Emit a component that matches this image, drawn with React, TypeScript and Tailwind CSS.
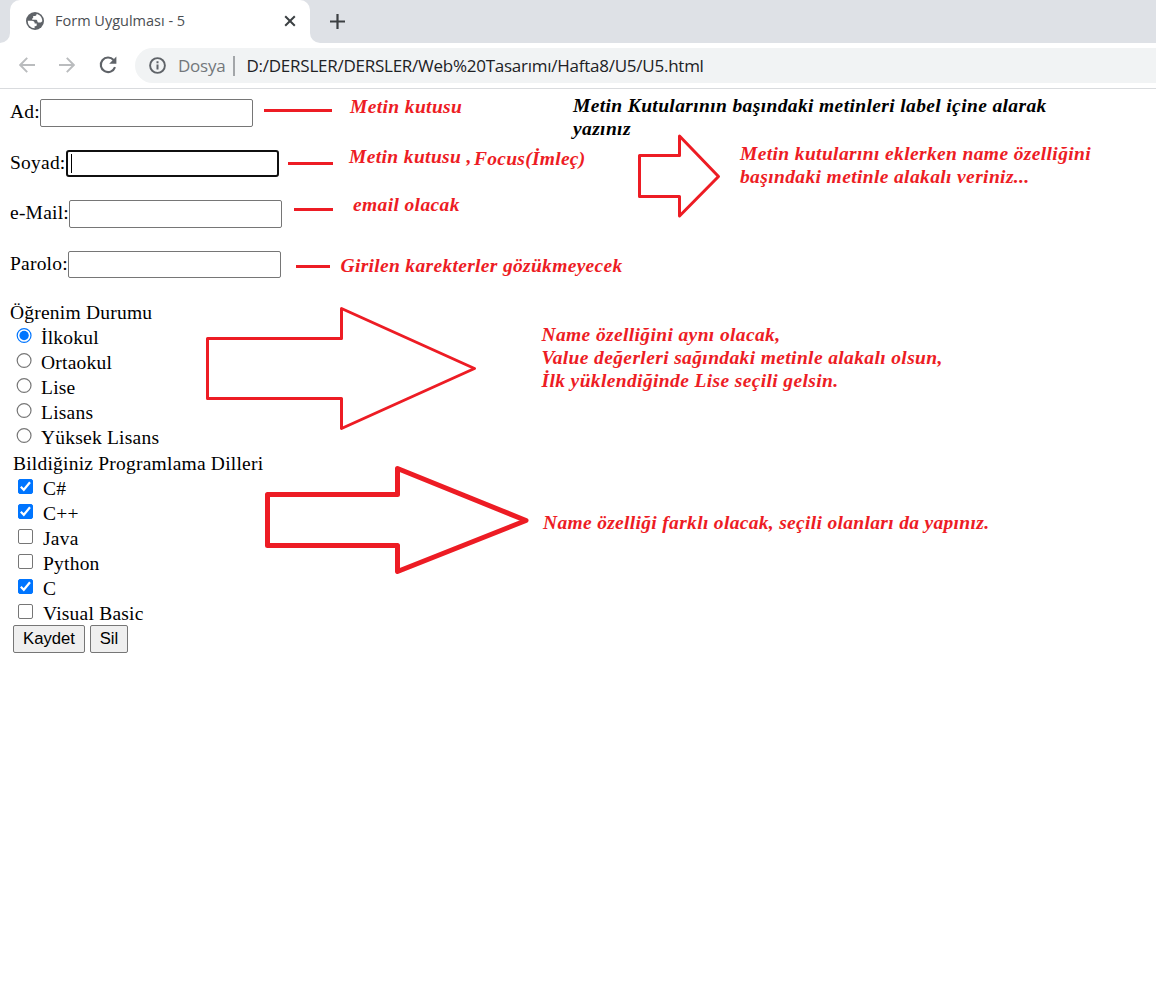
import type { ReactNode } from "react";

const fields = [
  { label: "Ad:", w: "w-[30px]", h: "h-7", row: "h-[51px]", type: "text" },
  { label: "Soyad:", w: "w-[56px]", h: "h-[27px]", row: "h-[50px]", type: "text", focused: true },
  { label: "e-Mail:", w: "w-[59px]", h: "h-7", row: "h-[51px]", type: "email" },
  { label: "Parolo:", w: "w-[58px]", h: "h-[27px]", row: "h-[49px]", type: "password" },
];

const schools = ["İlkokul", "Ortaokul", "Lise", "Lisans", "Yüksek Lisans"];

const languages = [
  { name: "C#", on: true },
  { name: "C++", on: true },
  { name: "Java", on: false },
  { name: "Python", on: false },
  { name: "C", on: true },
  { name: "Visual Basic", on: false },
];

function Browser() {
  return (
    <header className="font-['Open_Sans',sans-serif]">
      <div className="flex h-[43px] bg-[#dee1e6]">
        <div className="w-2.5 bg-white">
          <div className="h-full rounded-br-[10px] bg-[#dee1e6]" />
        </div>
        <div className="flex w-[300px] items-center rounded-t-[10px] bg-white pl-4 pr-3">
          <svg className="-mt-0.5 size-[18px] shrink-0" viewBox="0 0 18 18">
            <circle cx="9" cy="9" r="9" fill="#5f6368" />
            <path
              d="M1.700 8.800h4.100c1.900 0 2.900.9 2.900 2.600h2v1.700c0 .8-.5 1.200-1.300 1.200H8.600v2A7.300 7.300 0 0 1 1.700 8.800z"
              fill="#fff"
            />
            <path
              d="M10.600 1.900c-.1 1.300-.6 2-1.700 2H7.200v1.500c0 .6-.4.9-1 .9v1.400h3.500c1.100 0 1.700.6 1.700 1.600 0 .8.5 1.200 1.300 1.200h1.200c.9 0 1.600-.5 2.400-1.300C16.400 5.400 14 2.600 10.600 1.900z"
              fill="#fff"
            />
          </svg>
          <span className="ml-[11px] -mt-0.5 whitespace-nowrap text-[14.500px] text-[#4a4e52]">
            Form Uygulması - 5
          </span>
          <svg className="-mt-px ml-auto size-4" viewBox="0 0 16 16" stroke="#3c4043" strokeWidth="2">
            <path d="M3.200 3.200l9.600 9.600M12.800 3.200l-9.600 9.600" />
          </svg>
        </div>
        <div className="w-2.5 bg-white">
          <div className="h-full rounded-bl-[10px] bg-[#dee1e6]" />
        </div>
        <svg className="ml-2.5 mt-3.5 size-[15px]" viewBox="0 0 15 15" stroke="#3c4043" strokeWidth="2.200">
          <path d="M7.500 0v15M0 7.500h15" />
        </svg>
      </div>
      <div className="flex h-[46px] items-center border-b border-[#d9dbde] bg-white pl-[19px]">
        <svg className="-mt-0.5 size-4" viewBox="0 0 16 16" fill="none" stroke="#babcbe" strokeWidth="1.900">
          <path d="M16 8H1.500M8.200 .8L1.200 8l7 7.200" />
        </svg>
        <svg className="-mt-0.5 ml-6 size-4" viewBox="0 0 16 16" fill="none" stroke="#babcbe" strokeWidth="1.900">
          <path d="M0 8h14.500M7.800 .8l7 7.200-7 7.200" />
        </svg>
        <svg className="-mt-0.5 ml-6 size-[18px]" viewBox="0 0 18 18">
          <path d="M14.600 4A7.300 7.300 0 1 0 16 11.200" fill="none" stroke="#5f6368" strokeWidth="2.100" />
          <path d="M17.400 .6v7.200h-7.200z" fill="#5f6368" />
        </svg>
        <div className="ml-[18px] flex h-[35px] flex-1 items-center rounded-l-full bg-[#f1f3f4] pl-3.5">
          <svg className="size-[17px]" viewBox="0 0 17 17">
            <circle cx="8.500" cy="8.500" r="7.400" fill="none" stroke="#5f6368" strokeWidth="1.900" />
            <path d="M8.500 7.600v5M8.500 4.200v2" stroke="#5f6368" strokeWidth="2" />
          </svg>
          <span className="ml-[12px] w-[47px] whitespace-nowrap text-[17px] tracking-[-0.260px] text-[#73777b]">
            Dosya
          </span>
          <span className="ml-2 h-5 w-0.5 bg-[#a3a6a9]" />
          <span className="ml-[11.500px] whitespace-nowrap text-[17px] tracking-[-0.250px] text-[#202124]">
            D:/DERSLER/DERSLER/Web%20Tasarımı/Hafta8/U5/U5.html
          </span>
        </div>
      </div>
    </header>
  );
}

function Form() {
  return (
    <form className="flex flex-col pl-2.5 pt-[10px] text-[19.500px] leading-[25px] tracking-[0.220px] text-black">
      {fields.map((f) => (
        <div key={f.label} className={"flex items-start " + f.row}>
          <label className={"whitespace-nowrap " + f.w}>{f.label}</label>
          {f.focused ? (
            <div className={"flex w-[213px] items-center rounded-[3px] border-2 border-[#101010] bg-white pl-[3px] " + f.h}>
              <span className="h-[19px] w-px bg-black" />
            </div>
          ) : (
            <input type={f.type} className={"w-[213px] rounded-[2px] border border-[#767676] bg-white " + f.h} />
          )}
        </div>
      ))}
      <div className="h-[25px]">Öğrenim Durumu</div>
      {schools.map((s, i) => (
        <label key={s} className="flex h-[25px] items-start pl-1.5">
          <svg className="mt-[3px] mr-[9px] h-[15px] w-4" viewBox="0 0 16 15">
            <circle cx="8.100" cy="7.500" r="6.900" fill="#fff" stroke={i === 0 ? "#0075ff" : "#767676"} strokeWidth="1.200" />
            {i === 0 && <circle cx="8.100" cy="7.500" r="4.700" fill="#0075ff" />}
          </svg>
          {s}
        </label>
      ))}
      <div className="h-[26px] pl-[3px] pt-px">Bildiğiniz Programlama Dilleri</div>
      {languages.map((l) => (
        <label key={l.name} className="flex h-[25px] items-start pl-2">
          <span
            className={
              "mt-[3px] mr-2.5 size-[15px] rounded-[2px] border " +
              (l.on ? "border-[#0075ff] bg-[#0075ff]" : "border-[#767676] bg-white")
            }
          >
            {l.on && (
              <svg viewBox="0 0 13 13" className="size-[13px]" fill="none" stroke="#fff" strokeWidth="2.200">
                <path d="M1.800 6.800l3 3L11 2.300" />
              </svg>
            )}
          </span>
          {l.name}
        </label>
      ))}
      <div className="-mt-px flex gap-[5px] pl-[3px] font-['Liberation_Sans',sans-serif] text-[16.670px] leading-6 tracking-normal">
        <button type="button" className="h-7 w-[72px] rounded-[2px] border border-[#767676] bg-[#efefef]">
          Kaydet
        </button>
        <button type="button" className="h-7 w-[38px] rounded-[2px] border border-[#767676] bg-[#efefef]">
          Sil
        </button>
      </div>
    </form>
  );
}

function Note({ at, tracking = "tracking-[0.370px]", children }: { at: string; tracking?: string; children: ReactNode }) {
  return (
    <p className={"absolute whitespace-nowrap text-[19.500px] font-bold italic leading-[23px] " + tracking + " " + at}>
      {children}
    </p>
  );
}

/* Hand-placed remarks and arrows lying over the page */
function Annotations() {
  return (
    <div className="pointer-events-none absolute inset-0 text-[#ed1c24]">
      <svg className="absolute inset-0" width="1156" height="1008" fill="none" stroke="#ed1c24" strokeWidth="3" strokeLinejoin="round">
        <path d="M264 110.500h68M288 163.500h45M294 209.500h39M296 266.500h34" />
        <path d="M639.500 155.500h40v-19.500L718.500 176.500 679.500 216v-19.500h-40z" />
        <path d="M207.500 338.500h134v-30L474.500 368.500 341.500 428.500v-30h-134z" />
        <path d="M267.500 494.500h130v-26L526 520.500 397.500 571.500v-26h-130z" strokeWidth="5" />
      </svg>
      <Note at="left-[350px] top-[95px]">Metin kutusu</Note>
      <Note at="left-[349px] top-[145px]">Metin kutusu ,</Note>
      <Note at="left-[474px] top-[147px]" tracking="tracking-[0.270px]">Focus(İmleç)</Note>
      <Note at="left-[353px] top-[193px]">email olacak</Note>
      <Note at="left-[340.500px] top-[254px]" tracking="tracking-[0.320px]">Girilen karekterler gözükmeyecek</Note>
      <Note at="left-[573px] top-[94px] text-black">
        Metin Kutularının başındaki metinleri label içine alarak
        <br />
        yazınız
      </Note>
      <Note at="left-[740px] top-[142px]">
        Metin kutularını eklerken name özelliğini
        <br />
        başındaki metinle alakalı veriniz...
      </Note>
      <Note at="left-[541.500px] top-[323px]">
        Name özelliğini aynı olacak,
        <br />
        Value değerleri sağındaki metinle alakalı olsun,
        <br />
        İlk yüklendiğinde Lise seçili gelsin.
      </Note>
      <Note at="left-[543px] top-[511px]" tracking="tracking-[0.320px]">
        Name özelliği farklı olacak, seçili olanları da yapınız.
      </Note>
    </div>
  );
}

export default function App() {
  return (
    <main className="relative h-[1008px] w-[1156px] overflow-hidden bg-white font-['Liberation_Serif',serif]">
      <Browser />
      <Form />
      <Annotations />
    </main>
  );
}
